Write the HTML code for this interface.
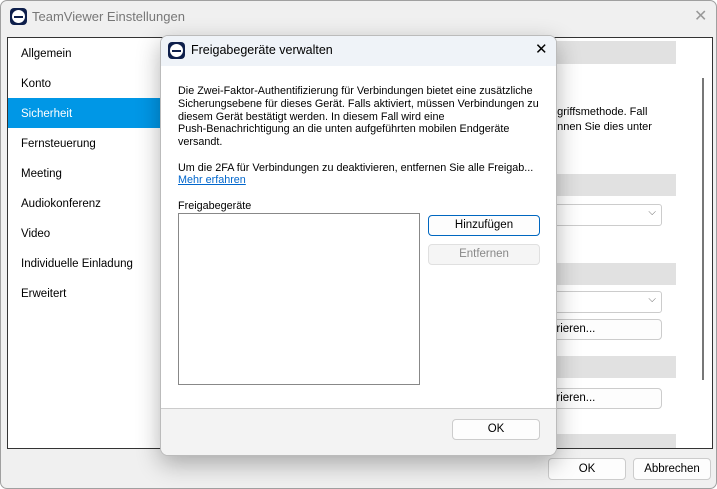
<!DOCTYPE html>
<html><head><meta charset="utf-8"><style>
*{margin:0;padding:0;box-sizing:border-box}
body{width:717px;height:489px;background:#fff;font-family:"Liberation Sans",sans-serif;font-size:12px;color:#000;position:relative;overflow:hidden}
.win{position:absolute;left:0;top:0;width:717px;height:489px;background:#f0f0f0;border:1px solid #a0a0a0;border-radius:7px}
.abs{position:absolute}
.logo{position:absolute;width:17px;height:17px;background:#0e1f4b;border-radius:4px}
.logo:after{content:"";position:absolute;left:2px;top:2px;width:13px;height:13px;border-radius:50%;background:#fff}
.logo i{position:absolute;left:4px;top:8px;width:9px;height:1.5px;background:#0e1f4b;z-index:2}
.frame{position:absolute;left:6px;top:36px;width:706px;height:412px;border:1px solid #333;background:#fff}
.nav div{position:absolute;left:13px;font-size:11.5px}
.gb{position:absolute;left:545px;width:130px;background:#e1e1e1}
.dd{position:absolute;left:545px;width:116px;height:22px;border:1px solid #ccc;border-radius:3px;background:#fff}
.btn{position:absolute;border:1px solid #ccc;border-radius:4px;background:#fdfdfd;text-align:center;font-size:11.5px}
.dlg{position:absolute;left:160px;top:35px;width:397px;height:421px;background:#fff;border:1px solid #bbb;border-radius:8px;box-shadow:0 8px 24px rgba(0,0,0,.3);overflow:hidden}
.dlg p{position:absolute;left:17px;font-size:10.8px;line-height:12.8px}
</style></head><body>
<div class="win">
 <div class="logo" style="left:9px;top:7px"><i></i></div>
 <div class="abs" style="left:31px;top:8px;font-size:13px;color:#777">TeamViewer Einstellungen</div>
 <div class="abs" style="left:693px;top:5px;font-size:16px;color:#999;font-weight:300">✕</div>
 <div class="frame">
  <div class="abs" style="left:0;top:60px;width:155px;height:30px;background:#0097e6"></div>
  <div class="nav">
   <div style="top:10px">Allgemein</div>
   <div style="top:40px">Konto</div>
   <div style="top:70px;color:#fff">Sicherheit</div>
   <div style="top:100px">Fernsteuerung</div>
   <div style="top:130px">Meeting</div>
   <div style="top:160px">Audiokonferenz</div>
   <div style="top:190px">Video</div>
   <div style="top:220px">Individuelle Einladung</div>
   <div style="top:250px">Erweitert</div>
  </div>
  <div class="abs" style="left:694px;top:40px;width:2px;height:302px;background:#777"></div>
 </div>
 <div class="gb" style="top:40px;height:23px"></div>
 <div class="abs" style="left:550px;top:104px;font-size:11px;line-height:15px">ugriffsmethode. Fall<br>önnen Sie dies unter</div>
 <div class="gb" style="top:173px;height:22px"></div>
 <div class="dd" style="top:203px"><span class="abs" style="right:5px;top:2px;font-size:10px;color:#666">⌵</span></div>
 <div class="gb" style="top:262px;height:22px"></div>
 <div class="dd" style="top:290px"><span class="abs" style="right:5px;top:2px;font-size:10px;color:#666">⌵</span></div>
 <div class="btn" style="left:545px;top:318px;width:116px;height:21px;line-height:19px;text-align:left;padding-left:3px">urieren...</div>
 <div class="gb" style="top:355px;height:22px"></div>
 <div class="btn" style="left:545px;top:387px;width:116px;height:21px;line-height:19px;text-align:left;padding-left:3px">urieren...</div>
 <div class="gb" style="top:433px;height:14px"></div>
 <div class="btn" style="left:547px;top:457px;width:78px;height:22px;line-height:20px">OK</div>
 <div class="btn" style="left:632px;top:457px;width:78px;height:22px;line-height:20px">Abbrechen</div>
</div>
<div class="dlg">
 <div class="abs" style="left:0;top:0;width:397px;height:30px;background:#eff3f8"></div>
 <div class="logo" style="left:7px;top:6px"><i></i></div>
 <div class="abs" style="left:30px;top:7px;font-size:12.5px">Freigabegeräte verwalten</div>
 <div class="abs" style="left:374px;top:4px;font-size:15px;font-weight:300">✕</div>
 <p style="top:49px">Die Zwei-Faktor-Authentifizierung für Verbindungen bietet eine zusätzliche<br>Sicherungsebene für dieses Gerät. Falls aktiviert, müssen Verbindungen zu<br>diesem Gerät bestätigt werden. In diesem Fall wird eine<br>Push-Benachrichtigung an die unten aufgeführten mobilen Endgeräte<br>versandt.</p>
 <p style="top:126px">Um die 2FA für Verbindungen zu deaktivieren, entfernen Sie alle Freigab...</p>
 <p style="top:138px;color:#0066cc;text-decoration:underline">Mehr erfahren</p>
 <p style="top:164px">Freigabegeräte</p>
 <div class="abs" style="left:17px;top:177px;width:242px;height:172px;border:1px solid #888"></div>
 <div class="btn" style="left:267px;top:179px;width:112px;height:21px;line-height:19px;border-color:#0067c0">Hinzufügen</div>
 <div class="btn" style="left:267px;top:208px;width:112px;height:21px;line-height:19px;color:#888;background:#f5f5f5;border-color:#e0e0e0">Entfernen</div>
 <div class="abs" style="left:0;top:372px;width:397px;height:49px;background:#f3f3f3;border-top:1px solid #ccc"></div>
 <div class="btn" style="left:291px;top:383px;width:88px;height:21px;line-height:19px">OK</div>
</div>
</body></html>
